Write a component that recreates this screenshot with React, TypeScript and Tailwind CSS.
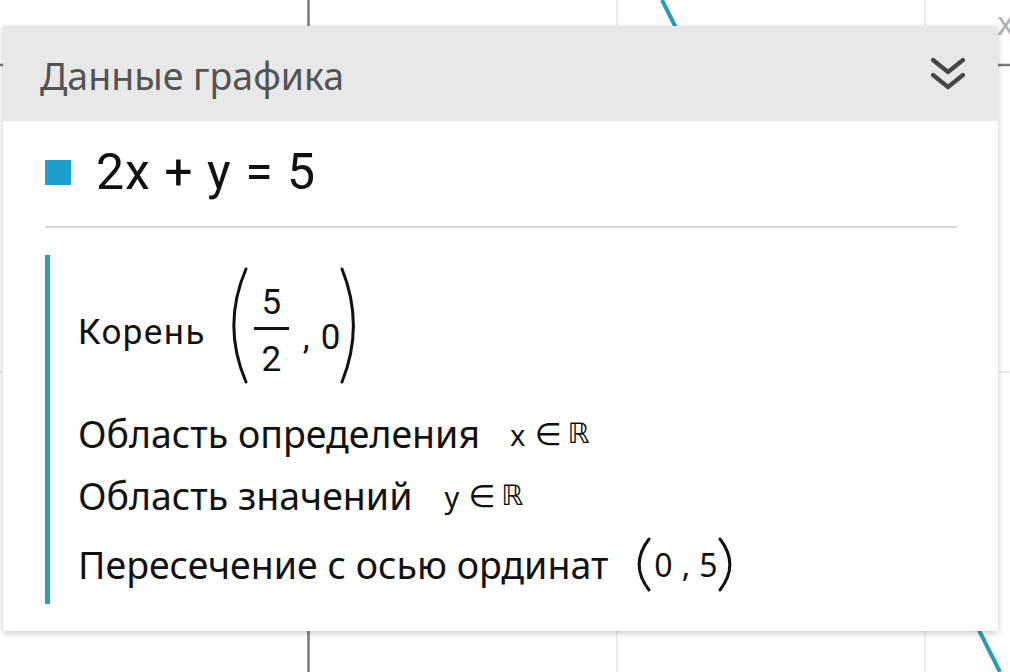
import React from "react";

function Paren({ side, h, w, sw = 3 }: { side: "l" | "r"; h: number; w: number; sw?: number }) {
  const d =
    side === "l"
      ? `M${w - 2} 2 Q${-w * 0.55} ${h / 2} ${w - 2} ${h - 2}`
      : `M2 2 Q${w + w * 0.55} ${h / 2} 2 ${h - 2}`;
  return (
    <svg width={w} height={h} viewBox={`0 0 ${w} ${h}`} className="shrink-0">
      <path d={d} fill="none" stroke="#111" strokeWidth={sw} strokeLinecap="round" />
    </svg>
  );
}

function Background() {
  return (
    <svg className="absolute inset-0" width={1010} height={672} viewBox="0 0 1010 672">
      <line x1={617} y1={0} x2={617} y2={672} stroke="#e6e6e6" strokeWidth={1.5} />
      <line x1={925} y1={0} x2={925} y2={672} stroke="#e6e6e6" strokeWidth={1.5} />
      <line x1={0} y1={372} x2={1010} y2={372} stroke="#e6e6e6" strokeWidth={1.5} />
      <line x1={308.5} y1={0} x2={308.5} y2={672} stroke="#7a7a7a" strokeWidth={2.5} />
      <line x1={0} y1={65} x2={1010} y2={65} stroke="#7a7a7a" strokeWidth={2.5} />
      <text x={997} y={35} fill="#b0b0b0" fontSize={32} fontFamily="'Noto Sans', sans-serif">x</text>
      <line x1={662} y1={0} x2={1000} y2={672} stroke="#2a9cb6" strokeWidth={4} />
    </svg>
  );
}

export default function App() {
  const noto = "font-['Noto_Sans',sans-serif]";
  const roboto = "font-['Roboto',sans-serif]";
  const dv = "font-['DejaVu_Sans',sans-serif]";
  return (
    <div className="relative w-[1010px] h-[672px] overflow-hidden bg-white">
      <Background />
      <div className="relative ml-[3px] mt-[26px] w-[995px] bg-white shadow-[0_2px_6px_rgba(0,0,0,0.22)]">
        <div className="h-[95px] bg-[#e8e8e8] flex items-center justify-between pl-[37px] pr-[30px]">
          <span className={`${noto} text-[37.5px] leading-none text-[#535353] pt-[5px]`}>Данные графика</span>
          <svg width="40" height="40" viewBox="0 0 40 40">
            <path d="M5 6 L20 18 L35 6" fill="none" stroke="#474747" strokeWidth={4.2} strokeLinecap="round" strokeLinejoin="round" />
            <path d="M5 21 L20 33 L35 21" fill="none" stroke="#474747" strokeWidth={4.2} strokeLinecap="round" strokeLinejoin="round" />
          </svg>
        </div>
        <div className="pl-[42px] pr-[41px] pt-[32px] pb-[27px]">
          <div className="flex items-center h-[38px]">
            <div className="w-[26px] h-[25px] bg-[#1c9fca] mr-[25px]" />
            <span className={`${roboto} text-[50px] leading-none text-[#111] tracking-[1px]`}>2x + y = 5</span>
          </div>
          <div className="mt-[35px] h-[2px] bg-[#d6d6d6]" />
          <div className="mt-[27px] border-l-[5px] border-[#2d9fb2] pl-[28px] pt-[12px] pb-0 text-[#111]">
            <div className="flex items-center h-[117px]">
              <span className={`${roboto} text-[35px] leading-none tracking-[1.4px] mr-[25px] pt-[14px]`}>Корень</span>
              <Paren side="l" h={117} w={17} />
              <div className={`${roboto} flex flex-col items-center ml-[6px] mt-[9px] text-[35px] leading-none`}>
                <span className="pb-[7px] pt-[2px]">5</span>
                <div className="w-[35px] h-[2.5px] bg-[#111]" />
                <span className="pt-[12px]">2</span>
              </div>
              <span className={`${roboto} text-[35px] leading-none ml-[14px] mt-[24px]`}>,</span>
              <span className={`${roboto} text-[35px] leading-none ml-[11px] mt-[24px]`}>0</span>
              <Paren side="r" h={117} w={16} />
            </div>
            <div className="flex items-center h-[62px] mt-[19px]">
              <span className={`${noto} text-[37.5px] leading-none`}>Область определения</span>
              <span className={`${noto} text-[29px] leading-none ml-[30px]`}>x</span>
              <span className={`${dv} text-[31px] leading-none ml-[9px]`}>∈</span>
              <span className={`${dv} text-[28px] leading-none ml-[6px]`}>ℝ</span>
            </div>
            <div className="flex items-center h-[62px]">
              <span className={`${noto} text-[37.5px] leading-none`}>Область значений</span>
              <span className={`${noto} text-[29px] leading-none ml-[32px]`}>y</span>
              <span className={`${dv} text-[31px] leading-none ml-[9px]`}>∈</span>
              <span className={`${dv} text-[28px] leading-none ml-[6px]`}>ℝ</span>
            </div>
            <div className="flex items-center h-[73px] mt-[4px] pb-[6px]">
              <span className={`${noto} text-[37.5px] leading-none mr-[29px]`}>Пересечение с осью ординат</span>
              <Paren side="l" h={55} w={14} />
              <span className={`${noto} text-[32px] leading-none ml-[3px]`}>0</span>
              <span className={`${noto} text-[32px] leading-none ml-[9px] mr-[9px]`}>,</span>
              <span className={`${noto} text-[32px] leading-none`}>5</span>
              <Paren side="r" h={55} w={14} />
            </div>
          </div>
        </div>
      </div>
    </div>
  );
}
